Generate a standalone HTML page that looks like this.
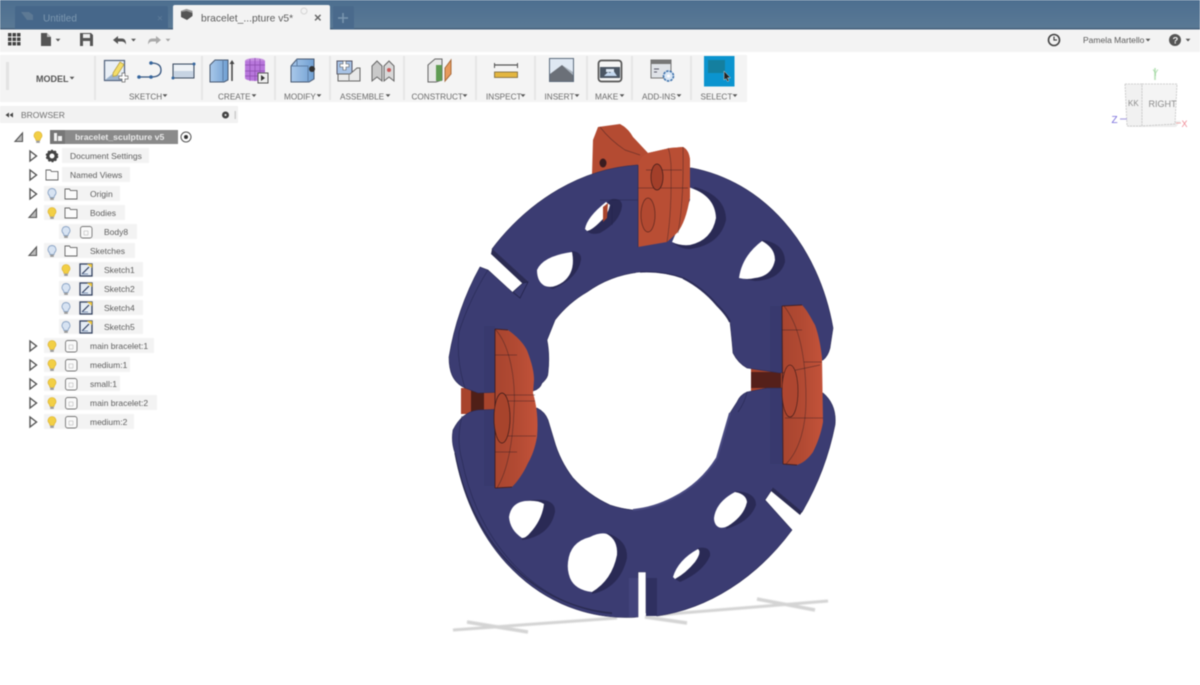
<!DOCTYPE html>
<html><head><meta charset="utf-8"><title>bracelet_sculpture v5</title>
<style>
html,body{margin:0;padding:0;background:#fff;width:1200px;height:685px;overflow:hidden}
svg{display:block;font-family:"Liberation Sans",sans-serif}
.ui{filter:blur(.45px)}
.t{font-size:8.5px;fill:#5f5f5f}
.tb{font-size:8.2px;fill:#6a6a6a}
.lb{fill:#f3f3f3}
.sep{stroke:#e6e6e6;stroke-width:2}
.e{fill:none;stroke:#2a1a20;stroke-width:.7;opacity:.5}
.w{fill:none;stroke:#23244c;stroke-width:.8;opacity:.6}
.rim{fill:#2a2a55}
.hole{fill:#fff}
</style></head><body>
<svg width="1200" height="685" viewBox="0 0 1200 685" xmlns="http://www.w3.org/2000/svg">
<defs>
<linearGradient id="top" x1="0" y1="0" x2="0" y2="1"><stop offset="0" stop-color="#4d6f90"/><stop offset="1" stop-color="#5a7995"/></linearGradient>
<linearGradient id="blue" x1="0" y1="0" x2="1" y2="0"><stop offset="0" stop-color="#a9c8ea"/><stop offset="1" stop-color="#6f9fd2"/></linearGradient>
<linearGradient id="red" x1="0" y1="0" x2="1" y2="0"><stop offset="0" stop-color="#a8452f"/><stop offset=".5" stop-color="#b24a33"/><stop offset="1" stop-color="#c4533a"/></linearGradient>
<g id="by"><path d="M0-5.5a4 4 0 0 1 2.6 7L2 3.5h-4l-.6-2A4 4 0 0 1 0-5.5z" fill="#f2cf45" stroke="#d9ad2a" stroke-width=".6"/><rect x="-1.8" y="3.7" width="3.6" height="2.2" fill="#9a9a9a"/></g>
<g id="bb"><path d="M0-5.5a4 4 0 0 1 2.6 7L2 3.5h-4l-.6-2A4 4 0 0 1 0-5.5z" fill="#d7e3f2" stroke="#8ba4c6" stroke-width=".9"/><rect x="-1.8" y="3.7" width="3.6" height="2.2" fill="#9a9a9a"/></g>
<path id="fo" d="M-6-5h4.5l1 1.6H6V5H-6z" fill="#fbfbfb" stroke="#666" stroke-width=".9"/>
<g id="bx"><rect x="-5.5" y="-5.5" width="11.5" height="11.5" rx="2.2" fill="#fafafa" stroke="#777" stroke-width=".9"/><rect x="-2" y="-1" width="4" height="4" fill="none" stroke="#bbb" stroke-width=".6"/></g>
<g id="sk"><rect x="-6" y="-6" width="12" height="12" fill="#e5ecf4" stroke="#33415f" stroke-width="1.3"/><path d="M-4 4L3-3" stroke="#33415f" stroke-width="1.2"/><path d="M1-6l5 0 0 4z" fill="#f0c83c"/><path d="M-4 4h6" stroke="#7d93b4"/></g>
<path id="op" d="M-4 4.5L3.5 4.5V-4z" fill="#bbb" stroke="#555" stroke-width="1.1"/>
<path id="cl" d="M-3-5L3.5 0-3 5z" fill="#fff" stroke="#555" stroke-width="1.4"/>
<path id="dn" d="M-2.4-1.3H2.4L0 1.5z" fill="#555"/>
</defs>

<g class="ui">
<!-- title bar -->
<rect width="1200" height="29" fill="url(#top)"/>
<rect y="28" width="1200" height="1.5" fill="#47627c"/>
<path d="M15 29V8q0-2 2-2h149q2 0 2 2v21z" fill="#46678a"/>
<path d="M21 12h8l4 3v5h-6z" fill="#5d7994"/>
<text x="43" y="21.500" font-size="10" fill="#7d98b0">Untitled</text>
<text x="157" y="21.500" font-size="10" fill="#5f7d9a">×</text>
<path d="M173 30V7q0-2 2-2h153q2 0 2 2v23z" fill="#f3f3f3"/>
<path d="M181 11l5.500-2 6 2v5l-5.500 4-6-3z" fill="#555"/><path d="M186.500 9l6 2v2l-6-2-5 1v-1z" fill="#9b9b9b"/>
<text x="201" y="21.500" font-size="10.300" fill="#5c5c5c">bracelet_...pture v5*</text>
<circle cx="304" cy="11" r="3" fill="none" stroke="#d5d5d5"/>
<text x="314" y="22" font-size="13" font-weight="bold" fill="#666">×</text>
<path d="M333 29V8q0-2 2-2h17q2 0 2 2v21z" fill="#4a6a8c"/>
<path d="M343 13v10M338 18h10" stroke="#7b96b0" stroke-width="1.500"/>

<!-- quick access -->
<rect y="29.500" width="1200" height="22.500" fill="#f3f3f3"/>
<g fill="#444"><rect x="8" y="33" width="3.500" height="3.500"/><rect x="12.500" y="33" width="3.500" height="3.500"/><rect x="17" y="33" width="3.500" height="3.500"/><rect x="8" y="37.500" width="3.500" height="3.500"/><rect x="12.500" y="37.500" width="3.500" height="3.500"/><rect x="17" y="37.500" width="3.500" height="3.500"/><rect x="8" y="42" width="3.500" height="3.500"/><rect x="12.500" y="42" width="3.500" height="3.500"/><rect x="17" y="42" width="3.500" height="3.500"/></g>
<path d="M41 33h6l4 4v9H41z" fill="#555"/><path d="M47 33v4h4" fill="#bbb"/><use href="#dn" x="58" y="40"/>
<path d="M80 33h11l2 2v11H80z" fill="#555"/><rect x="83" y="34" width="7" height="4" fill="#eee"/><rect x="83" y="41" width="7" height="5" fill="#eee"/>
<path d="M113 40l5-4v2.500h4q4 0 4 6q-1.500-3-4-3h-4v2.500z" fill="#555"/><use href="#dn" x="133.500" y="40"/>
<path d="M161 40l-5-4v2.500h-4q-4 0-4 6q1.500-3 4-3h4v2.500z" fill="#aaa"/><use href="#dn" x="168" y="40" opacity=".5"/>
<circle cx="1054" cy="40" r="5.500" fill="none" stroke="#444" stroke-width="1.600"/><path d="M1054 36.500v3.500h3" fill="none" stroke="#444" stroke-width="1.200"/>
<text x="1083" y="43" font-size="8.500" fill="#5a5a5a">Pamela Martello</text><use href="#dn" x="1148" y="40"/>
<circle cx="1175" cy="40" r="6" fill="#555"/><text x="1172.500" y="43.500" font-size="9.500" font-weight="bold" fill="#f3f3f3">?</text><use href="#dn" x="1188" y="40"/>

<!-- toolbar -->
<rect y="55" width="747" height="47" fill="#f4f4f4"/>
<rect x="6" y="62" width="3" height="28" fill="#e3e3e3"/>
<line class="sep" x1="95" y1="56" x2="95" y2="100"/><line class="sep" x1="202" y1="56" x2="202" y2="100"/><line class="sep" x1="275" y1="56" x2="275" y2="100"/><line class="sep" x1="330" y1="56" x2="330" y2="100"/><line class="sep" x1="404" y1="56" x2="404" y2="100"/><line class="sep" x1="476" y1="56" x2="476" y2="100"/><line class="sep" x1="535" y1="56" x2="535" y2="100"/><line class="sep" x1="587" y1="56" x2="587" y2="100"/><line class="sep" x1="632" y1="56" x2="632" y2="100"/><line class="sep" x1="691" y1="56" x2="691" y2="100"/>
<text x="36" y="82" font-size="9" font-weight="bold" fill="#555">MODEL</text><use href="#dn" x="72" y="78"/>

<!-- sketch icons -->
<rect x="104.500" y="60.500" width="20" height="20" fill="#e9eff6" stroke="#50617c" stroke-width="1.200"/><path d="M105 80l10-8 9 8z" fill="#9db3cd"/>
<path d="M113 73l7-11 4 2.500-7 11-4 1z" fill="#f3dd6a" stroke="#b49a3b" stroke-width=".7"/>
<path d="M119 76h3v-3h3v3h3v3h-3v3h-3v-3h-3z" fill="#fff" stroke="#666" stroke-width=".7"/>
<path d="M139 77h12q10 0 10-7t-10-7" fill="none" stroke="#33537e" stroke-width="1.300"/>
<circle cx="139" cy="77" r="1.800" fill="#35659d"/><circle cx="151" cy="77" r="1.800" fill="#35659d"/><circle cx="151" cy="63" r="1.800" fill="#35659d"/>
<rect x="173" y="64" width="21" height="14" fill="#c7d4e3" stroke="#3e4c60" stroke-width="1"/><rect x="174" y="65" width="19" height="6" fill="#eef2f6"/>
<circle cx="173" cy="78" r="1.500" fill="#35659d"/><circle cx="194" cy="64" r="1.500" fill="#35659d"/>

<!-- create icons -->
<path d="M210 65l5-5h13v20l-4 2h-14z" fill="url(#blue)" stroke="#4a5a72" stroke-width="1"/><path d="M223 60v21" stroke="#5a7da6"/><path d="M232 81V62" stroke="#444" stroke-width="1.500"/><path d="M229.500 64l2.500-4 2.500 4z" fill="#444"/>
<ellipse cx="255" cy="61" rx="10" ry="3" fill="#c68fe0"/><rect x="245" y="61" width="20" height="17" fill="#b877dc"/><ellipse cx="255" cy="78" rx="10" ry="3" fill="#b877dc"/>
<path d="M250 59v22M255 58v23M260 59v22M245 65h20M245 71h20M245 76h20" stroke="#8c4dae" stroke-width=".7"/>
<rect x="258" y="73" width="10" height="10" fill="#eee" stroke="#555"/><path d="M261 75l4 3-4 3z" fill="#333"/>

<!-- modify -->
<path d="M291 66l6-7h17v20l-5 3h-18z" fill="url(#blue)" stroke="#4a5a72"/><path d="M297 66v-7M291 66h17v16" fill="none" stroke="#5e7fa6"/><circle cx="312" cy="69" r="3" fill="#333"/><path d="M309 69h6" stroke="#333"/>

<!-- assemble -->
<rect x="337" y="61" width="15" height="13" fill="#a8c3e6" stroke="#556"/><path d="M340 64h3v-3h3v3h3v3h-3v3h-3v-3h-3z" fill="#fff" stroke="#555" stroke-width=".6"/>
<path d="M338 74h12l7-6h3v13h-22z" fill="#e9e9e9" stroke="#666"/><path d="M349 74v7" stroke="#888"/>
<path d="M372 66l5-5 5 5v15l-5-4-5 4z" fill="#c9c9c9" stroke="#666"/><path d="M384 66l5-5 5 5v15l-5-4-5 4z" fill="#d8d8d8" stroke="#666"/><circle cx="389" cy="70" r="2" fill="#c95b5b"/>

<!-- construct -->
<path d="M428 65l7-6h7v21l-6 2h-8z" fill="#e8e8e8" stroke="#666"/><path d="M436 65h6v16h-6z" fill="#5f9b53"/>
<path d="M445 68l6-8v14l-6 7z" fill="#e79a5c" stroke="#a86a3b"/>

<!-- inspect -->
<path d="M494.500 65h23" stroke="#555" stroke-width="1.200"/><path d="M494.500 63v5M517.500 63v5" stroke="#555"/>
<rect x="494.500" y="72" width="23" height="5.500" fill="#e3b63f" stroke="#77653a" stroke-width=".8"/>

<!-- insert -->
<rect x="549.500" y="58.500" width="24" height="23" fill="#dfe8f2" stroke="#5c6b7d" stroke-width="1"/><path d="M550 81V74l12-9 11 10v6z" fill="#6b7078"/><path d="M562 65l11 10v-3z" fill="#aab3bd"/>

<!-- make -->
<rect x="598.500" y="60.500" width="23" height="21" rx="3" fill="#f4f4f4" stroke="#555" stroke-width="1.700"/><rect x="600" y="67" width="20" height="11" fill="#4a5563"/><path d="M604 76l4-4 2 1 3-3 4 6z" fill="#c4d8ef"/><path d="M606 72h8v-3h-8z" fill="#dce7f3"/>

<!-- add-ins -->
<rect x="651" y="60" width="20" height="18" fill="#dfe2e7" stroke="#777"/><rect x="651" y="60" width="20" height="4" fill="#777"/><path d="M654 69h5M654 72h3" stroke="#556"/>
<circle cx="668.500" cy="76" r="5" fill="#d8e6f5" stroke="#3e72ac" stroke-width="1.600" stroke-dasharray="2.500 1"/><circle cx="668.500" cy="76" r="1.500" fill="#fff"/>

<!-- select -->
<rect x="704" y="56" width="30.500" height="30.500" fill="#0b94cf"/>
<rect x="708" y="60" width="17" height="13" fill="#147f9f"/>
<path d="M724 71v9l2-1.500 1.500 3 1.500-.7-1.500-3h3z" fill="#222" stroke="#ddd" stroke-width=".5"/>

<text class="tb" x="129" y="99.500">SKETCH</text><use href="#dn" x="165" y="95.500"/>
<text class="tb" x="218" y="99.500">CREATE</text><use href="#dn" x="254" y="95.500"/>
<text class="tb" x="284" y="99.500">MODIFY</text><use href="#dn" x="319" y="95.500"/>
<text class="tb" x="340" y="99.500">ASSEMBLE</text><use href="#dn" x="388" y="95.500"/>
<text class="tb" x="411.500" y="99.500">CONSTRUCT</text><use href="#dn" x="465" y="95.500"/>
<text class="tb" x="486" y="99.500">INSPECT</text><use href="#dn" x="523" y="95.500"/>
<text class="tb" x="544.500" y="99.500">INSERT</text><use href="#dn" x="577" y="95.500"/>
<text class="tb" x="595" y="99.500">MAKE</text><use href="#dn" x="622" y="95.500"/>
<text class="tb" x="642" y="99.500">ADD-INS</text><use href="#dn" x="679" y="95.500"/>
<text class="tb" x="700.500" y="99.500">SELECT</text><use href="#dn" x="735" y="95.500"/>

<!-- browser header -->
<rect x="0" y="106" width="238" height="17" fill="#f2f2f2"/>
<path d="M9 112.500l-3.500 2.500 3.500 2.500zM13 112.500l-3.500 2.500 3.500 2.500z" fill="#444"/>
<text x="21" y="118" font-size="8.500" fill="#707070">BROWSER</text>
<circle cx="225.500" cy="115" r="3.500" fill="#444"/><circle cx="225.500" cy="115" r="1" fill="#eee"/>
<rect x="234.500" y="111" width="1.500" height="8" fill="#ccc"/>

<!-- tree -->
<use href="#op" x="19" y="137"/><use href="#by" x="38" y="137"/>
<rect x="50" y="130" width="128" height="14" fill="#8a8a8a"/><rect x="50" y="130" width="15" height="14" fill="#777"/>
<path d="M54 133h3v8h-3zM58 136h4v5h-4z" fill="#f2f2f2"/>
<text x="75" y="140" font-size="8.700" font-weight="bold" fill="#eaeaea">bracelet_sculpture v5</text>
<circle cx="186" cy="137" r="5" fill="#fff" stroke="#555"/><circle cx="186" cy="137" r="2" fill="#333"/>

<rect class="lb" x="62" y="148" width="87" height="15"/><use href="#cl" x="33" y="156"/>
<circle cx="52" cy="156" r="4" fill="none" stroke="#444" stroke-width="3"/><circle cx="52" cy="156" r="5.600" fill="none" stroke="#444" stroke-width="1.400" stroke-dasharray="2 1.600"/>
<text class="t" x="70" y="159">Document Settings</text>

<rect class="lb" x="62" y="167" width="68" height="15"/><use href="#cl" x="33" y="175"/><use href="#fo" x="52" y="175"/>
<text class="t" x="70" y="178">Named Views</text>

<rect class="lb" x="44" y="186" width="76" height="15"/><use href="#cl" x="33" y="194"/><use href="#bb" x="52" y="194"/><use href="#fo" x="71" y="194"/>
<text class="t" x="90" y="197">Origin</text>

<rect class="lb" x="44" y="205" width="81" height="15"/><use href="#op" x="33" y="213"/><use href="#by" x="52" y="213"/><use href="#fo" x="71" y="213"/>
<text class="t" x="90" y="216">Bodies</text>

<rect class="lb" x="59" y="224" width="78" height="15"/><use href="#bb" x="66" y="232"/><use href="#bx" x="86" y="232"/>
<text class="t" x="104" y="235">Body8</text>

<rect class="lb" x="44" y="243" width="91" height="15"/><use href="#op" x="33" y="251"/><use href="#bb" x="52" y="251"/><use href="#fo" x="71" y="251"/>
<text class="t" x="90" y="254">Sketches</text>

<rect class="lb" x="59" y="262" width="84" height="15"/><use href="#by" x="66" y="270"/><use href="#sk" x="86" y="270"/>
<text class="t" x="104" y="273">Sketch1</text>
<rect class="lb" x="59" y="281" width="84" height="15"/><use href="#bb" x="66" y="289"/><use href="#sk" x="86" y="289"/>
<text class="t" x="104" y="292">Sketch2</text>
<rect class="lb" x="59" y="300" width="84" height="15"/><use href="#bb" x="66" y="308"/><use href="#sk" x="86" y="308"/>
<text class="t" x="104" y="311">Sketch4</text>
<rect class="lb" x="59" y="319" width="84" height="15"/><use href="#bb" x="66" y="327"/><use href="#sk" x="86" y="327"/>
<text class="t" x="104" y="330">Sketch5</text>

<rect class="lb" x="44" y="338" width="110" height="15"/><use href="#cl" x="33" y="346"/><use href="#by" x="52" y="346"/><use href="#bx" x="71" y="346"/>
<text class="t" x="90" y="349">main bracelet:1</text>
<rect class="lb" x="44" y="357" width="86" height="15"/><use href="#cl" x="33" y="365"/><use href="#by" x="52" y="365"/><use href="#bx" x="71" y="365"/>
<text class="t" x="90" y="368">medium:1</text>
<rect class="lb" x="44" y="376" width="76" height="15"/><use href="#cl" x="33" y="384"/><use href="#by" x="52" y="384"/><use href="#bx" x="71" y="384"/>
<text class="t" x="90" y="387">small:1</text>
<rect class="lb" x="44" y="395" width="113" height="15"/><use href="#cl" x="33" y="403"/><use href="#by" x="52" y="403"/><use href="#bx" x="71" y="403"/>
<text class="t" x="90" y="406">main bracelet:2</text>
<rect class="lb" x="44" y="414" width="90" height="15"/><use href="#cl" x="33" y="422"/><use href="#by" x="52" y="422"/><use href="#bx" x="71" y="422"/>
<text class="t" x="90" y="425">medium:2</text>

<!-- view cube -->
<path d="M1128 127l48 0 5-6-50-2z" fill="#e9e9e9" opacity=".8"/>
<path d="M1125 84h17v42h-15z" fill="#f1f1f1" stroke="#c2c2c2" stroke-width=".8" stroke-dasharray="2 1"/>
<path d="M1142 84h35l-2 40-33 2z" fill="#f4f4f4" stroke="#c2c2c2" stroke-width=".8" stroke-dasharray="2 1"/>
<text x="1148.500" y="107" font-size="9" fill="#8c8c8c">RIGHT</text>
<text x="1128" y="106" font-size="8" fill="#8c8c8c">KK</text>
<path d="M1155 68v12" stroke="#b4e0b4" stroke-width="1.500"/><text x="1152.500" y="76" font-size="9" fill="#a4d8a4">Y</text>
<path d="M1120 119h7" stroke="#aaa0e0" stroke-width="1.200"/><text x="1111.500" y="123" font-size="10" fill="#7b70dc">Z</text>
<path d="M1176 123h5" stroke="#f0b0b0"/><text x="1181.500" y="127" font-size="9" fill="#ef8a95">X</text>
</g>

<!-- 3D model -->
<!-- ground grid -->
<g fill="none" stroke="#d4d4d4" style="filter:blur(.8px)">
<path d="M453 630L617 618" stroke-width="3"/><path d="M467 622L528 632" stroke-width="3.500"/>
<path d="M645 617L687 623" stroke-width="3.500"/>
<path d="M657 615L828 601" stroke-width="3"/><path d="M757 599L815 610" stroke-width="3.500"/>
</g>

<g style="filter:blur(.4px)">
<!-- connecting links -->
<rect x="461" y="388" width="36" height="26" fill="#a8442c"/><rect x="471" y="390" width="13" height="22" fill="#4f1f17"/>
<rect x="751" y="368" width="36" height="24" fill="#a8442c"/><rect x="751" y="372" width="30" height="16" fill="#55201a"/>

<!-- top back red -->
<path d="M592 175L593 140L598 127L620 124Q628 128 633 137L648 153L670 148L683 147Q689 150 690 160L690 197Q686 222 677 233L667 242L620 240L600 205z" fill="#b44b32"/>
<path d="M600 127Q610 140 625 150L640 155" class="e"/>
<ellipse cx="603" cy="163" rx="3.500" ry="4.500" fill="#3a1c20"/>

<!-- upper ring -->
<path d="M637 165A190 232 14 0 0 492 249L528 282L520 298L512 292L488 270L480 267A190 232 14 0 0 449 357Q449 368 452 375Q456 384 465 388L478 393L533 391Q540 389 542 383Q548 378 548 373Q550 355 547 340L555 320A110 110 0 0 1 587 292A110 110 0 0 1 640 272A110 110 0 0 1 683 278A110 110 0 0 1 717 305Q727 315 730 322Q732 340 733 353Q738 363 747 368L780 373L823 360Q828 356 830 348L833 328A190 232 14 0 0 692 168z" fill="#3b3c72" stroke="#2c2c56" stroke-width=".6"/>
<!-- notch walls -->
<path d="M492 249L528 282L523 284L491 254z" fill="#2b2b52"/>
<path d="M523 283L528 282L520 298L513 292z" fill="#3b3c72" stroke="#23244c" stroke-width=".8"/>
<path d="M488 270A185 228 14 0 0 459 332Q456 360 465 388" class="w"/>
<path d="M683 278A110 110 0 0 1 717 305Q727 315 730 322" fill="none" stroke="#2c2c58" stroke-width="2"/>
<path d="M640 272A110 110 0 0 1 683 278" fill="none" stroke="#2c2c58" stroke-width="1.200"/>
<rect x="484" y="326" width="11" height="66" fill="#2f3064" opacity=".25"/>
<rect x="770" y="306" width="12" height="66" fill="#2f3064" opacity=".25"/>

<!-- upper holes -->
<path class="rim" d="M585 229Q590 212 612 199Q622 198 622 206Q620 222 600 233Q590 236 585 229z"/>
<path class="hole" d="M585 229Q587 217 606 202L610 205Q608 215 600 222Q592 230 587 231z"/>
<path d="M603 207L608 203L607 218L603 222z" fill="#a8442c"/>
<path class="rim" d="M572 251Q582 252 581 260Q578 278 553 289L545 286z"/>
<path class="hole" d="M537 270Q543 256 572 252Q576 272 563 282Q553 289 545 286Q537 282 537 270z"/>
<path class="rim" d="M695 187Q726 196 726 220Q720 245 690 249Q680 249 672 242L690 190z"/>
<path class="hole" d="M688 187Q715 195 716 218Q712 240 690 245Q680 246 672 242L690 200z"/>
<path class="rim" d="M762 240Q785 243 785 262Q780 280 755 281L739 278z"/>
<path class="hole" d="M739 278Q742 256 762 241Q775 248 775 260Q772 276 755 278Q747 280 739 278z"/>

<!-- top front red -->
<path d="M638 165L638 247L667 242L677 233Q686 222 690 197L690 160Q689 150 683 147L670 148L648 153Q640 156 638 165z" fill="#b94e34"/>
<path d="M667 242Q672 210 671 165Q670 152 668 148M678 233Q684 200 683 147" class="e" stroke-width="1"/>
<path d="M646 170h36M638 188h50" class="e"/>
<ellipse cx="657" cy="177" rx="6" ry="13" fill="#a33f2a" stroke="#3c1a18" stroke-width=".7"/>
<ellipse cx="648" cy="215" rx="7" ry="17" fill="#b04830" stroke="#3c1a18" stroke-width=".7" opacity=".75"/>
<path d="M600 200h38M612 205v20" class="w"/>
<path d="M638 165V247" stroke="#2c2c58" stroke-width=".8"/>

<!-- lower ring -->
<path d="M478 410Q462 412 453 430Q451 442 455 453A190 232 14 0 0 638 617L638 572L646 572L646 613L657 616A190 232 14 0 0 792 530L765 500L773 488L802 512A190 232 14 0 0 835 425Q837 405 823 393L783 388L767 388L747 392Q740 395 737 402L730 413L717 458A110 110 0 0 1 673 498A110 110 0 0 1 633 510A110 110 0 0 1 610 505A110 110 0 0 1 573 478A110 110 0 0 1 554 440L548 420Q545 412 537 408z" fill="#3b3c72" stroke="#2c2c56" stroke-width=".6"/>
<path d="M462 416Q456 440 462 460A186 228 14 0 0 612 614" class="w"/>
<path d="M455 453A190 232 14 0 0 612 613" fill="none" stroke="#2a2b50" stroke-width="1.200"/>
<path d="M747 392Q745 402 738 412" class="w"/>
<path d="M730 413L717 458A110 110 0 0 1 673 498A110 110 0 0 1 633 510" fill="none" stroke="#4a4b82" stroke-width="2"/>
<path d="M773 488L802 512L800 515L771 491z" fill="#2b2b52"/>
<path d="M629 578H638V617H629z" fill="#43447c"/><path d="M646 578H657V616H646z" fill="#2f3060"/>
<rect x="484" y="410" width="11" height="76" fill="#2f3064" opacity=".25"/>
<rect x="770" y="388" width="12" height="76" fill="#2f3064" opacity=".25"/>

<!-- lower holes -->
<path class="rim" d="M525 501Q556 496 555 512Q550 536 522 540z"/>
<path class="hole" d="M509 517Q511 503 525 501Q538 500 544 504Q542 520 530 533Q526 538 522 538Q510 530 509 517z"/>
<path class="rim" d="M607 533Q628 540 627 558Q620 588 592 594L592 560z"/>
<path class="hole" d="M568 562Q570 542 590 537Q600 532 607 534Q618 540 617 555Q612 580 592 592Q575 590 570 578Q567 570 568 562z"/>
<path class="rim" d="M698 548Q711 546 710 556Q703 572 680 582L675 579z"/>
<path class="hole" d="M673 577Q678 560 698 549Q702 552 695 562Q686 573 675 579z"/>
<path class="rim" d="M735 491Q756 492 756 505Q750 522 726 529z"/>
<path class="hole" d="M714 518Q716 502 735 492Q746 494 747 502Q744 516 728 526Q720 530 716 525Q714 522 714 518z"/>

<!-- left red disc -->
<path d="M495 329L508 330C518 337 526 346 528 353C532 364 534 372 534 380L533 393C538 410 538 425 537 437C535 448 532 456 528 463C523 474 517 482 512 487L495 488z" fill="url(#red)"/>
<path d="M495 329C510 345 516 380 514 410C513 440 508 470 497 488" class="e" stroke-width="1"/>
<path d="M495 329L508 330M495 488L512 487M495 329V488" stroke="#3a1a1e" stroke-width="1" fill="none" opacity=".8"/>
<path d="M505 395h30M500 401h35M495 355h22M498 436h38M495 452h22" class="e"/>
<ellipse cx="502" cy="418" rx="8" ry="25" fill="#a8442c" stroke="#3c1a18" stroke-width=".7"/>

<!-- right red disc -->
<path d="M782 306L802 305C807 310 811 318 815 325C819 336 821 348 822 358L823 422C821 434 817 444 813 452C808 459 803 463 797 465L783 464z" fill="url(#red)"/>
<path d="M784 306C800 326 806 360 806 400C806 425 800 450 786 464" class="e" stroke-width="1"/>
<path d="M782 306L802 305M783 464L797 465M782 306L783 464" stroke="#3a1a1e" stroke-width="1" fill="none" opacity=".8"/>
<path d="M782 373L820 365M804 362h18M785 418h38M782 330h20" class="e"/>
<ellipse cx="790" cy="391" rx="8" ry="26" fill="#ae4630" stroke="#3c1a18" stroke-width=".6"/>
</g>
</svg>
</body></html>
